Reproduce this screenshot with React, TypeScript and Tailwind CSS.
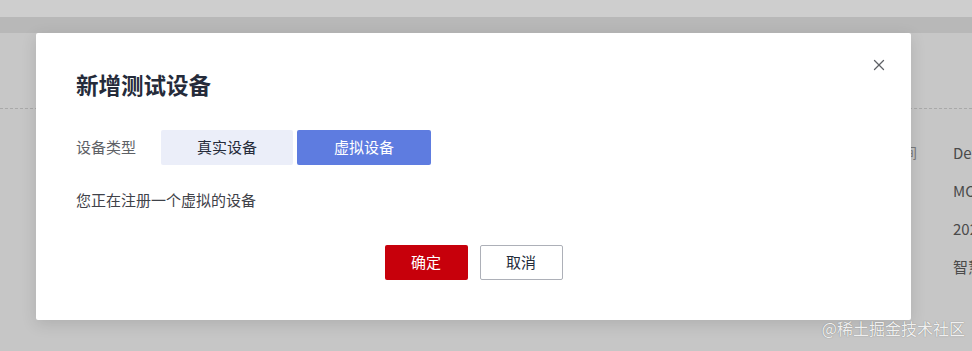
import { X } from 'lucide-react';

const rows = ['DevEco Device 01', 'MC-2024-000013', '2024-03-18 10:21:45', '智慧屏测试设备'];

const App = () => {
  return (
    <div
      className="relative h-[351px] w-[972px] overflow-hidden bg-[#c7c7c7]"
      style={{ fontFamily: '"Noto Sans CJK SC", "Noto Sans", sans-serif' }}
    >
      {/* Background page (dimmed by mask) */}
      <div className="h-[17px] bg-[#cecece]" />
      <div className="h-[16px] bg-[#b8b8b8]" />
      <div className="relative h-[312px] bg-[#c6c6c6]">
        <div className="mt-[75px] border-t border-dashed border-[#a9a9a9]" />
        <div className="flex justify-end pt-[33px]">
          <div className="flex flex-col gap-[17px] pr-[36px] text-[14px] leading-[21px] text-[#7a7a7a]">
            <span>创建时间</span>
          </div>
          <div className="flex w-[19px] flex-col gap-[17px] overflow-hidden whitespace-nowrap text-[15px] leading-[21px] text-[#4a4a4a]">
            {rows.map((r) => (
              <span key={r}>{r}</span>
            ))}
          </div>
        </div>
      </div>
      <div className="h-[6px] bg-[#b4b4b4]" />

      {/* Dialog */}
      <div className="absolute left-[36px] top-[33px] w-[875px] rounded-[2px] bg-white px-[40px] pb-[40px] pt-[36px] shadow-[0_4px_16px_rgba(0,0,0,0.12)]">
        <button className="absolute right-[23px] top-[23px] text-[#5e6166]">
          <X className="h-[18px] w-[18px]" strokeWidth={1.7} />
        </button>
        <h1 className="text-[22.5px] font-bold leading-[30px] text-[#252b3a]">新增测试设备</h1>

        <div className="mt-[31px] flex items-center">
          <span className="w-[85px] text-[15px] text-[#5e6166]">设备类型</span>
          <div className="flex gap-[4px]">
            <button className="h-[35px] w-[132px] rounded-[2px] bg-[#ebeef9] text-[15px] text-[#252b3a]">
              真实设备
            </button>
            <button className="h-[35px] w-[134px] rounded-[2px] bg-[#5e7ce0] text-[15px] text-white">
              虚拟设备
            </button>
          </div>
        </div>

        <p className="mt-[24px] text-[15px] leading-[22px] text-[#3f4249]">您正在注册一个虚拟的设备</p>

        <div className="mt-[34px] flex justify-center gap-[12px]">
          <button className="h-[35px] w-[83px] rounded-[2px] bg-[#c7000b] text-[15px] text-white">确定</button>
          <button className="h-[35px] w-[83px] rounded-[2px] border border-[#adb0b8] bg-white text-[15px] text-[#252b3a]">
            取消
          </button>
        </div>
      </div>

      {/* Watermark */}
      <div className="absolute right-[7px] top-[318px] z-10 text-[16px] leading-[20px] text-[#f0f0f0] [text-shadow:0_0_1px_#6f6f6f]">
        @稀土掘金技术社区
      </div>
    </div>
  );
};

export default App;
